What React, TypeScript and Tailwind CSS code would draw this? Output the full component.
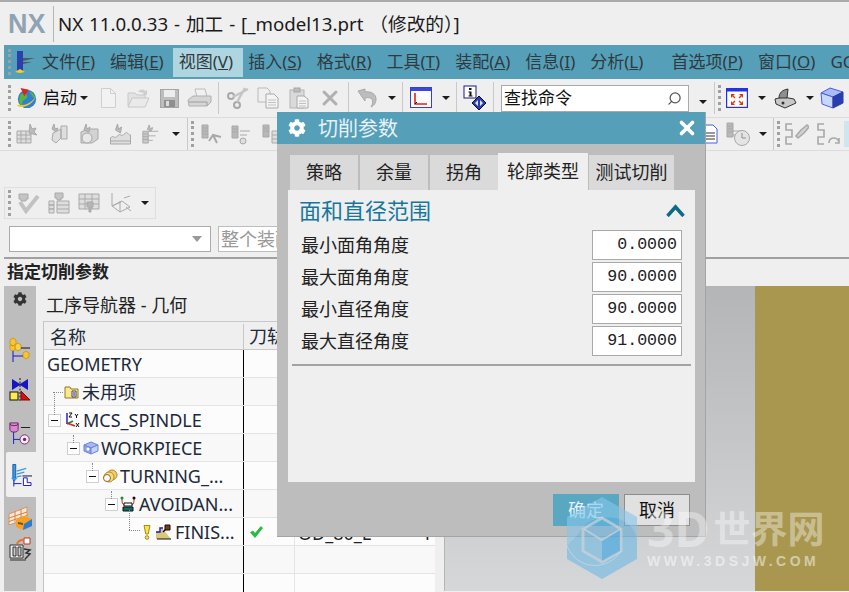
import { Search, X } from "lucide-react";
import { FaCog } from "react-icons/fa";

type IconProps = { className?: string };

const GREY = "#a9a9a9";
const PALE = "#dedede";

const MENU = [
  ["文件", "F"],
  ["编辑", "E"],
  ["视图", "V"],
  ["插入", "S"],
  ["格式", "R"],
  ["工具", "T"],
  ["装配", "A"],
  ["信息", "I"],
  ["分析", "L"],
];

const TABS = ["策略", "余量", "拐角"];

const ANGLES = [
  ["最小面角角度", "0.0000"],
  ["最大面角角度", "90.0000"],
  ["最小直径角度", "90.0000"],
  ["最大直径角度", "91.0000"],
];

/* ---------- small toolbar bits ---------- */

function Grip({ className = "" }: IconProps) {
  return <span className={`h-[26px] w-[3px] shrink-0 border-l-[3px] border-dotted border-[#a0a0a0] ${className}`} />;
}

function Sep({ className = "" }: IconProps) {
  return <span className={`h-[32px] w-px shrink-0 bg-[#c9c9c9] ${className}`} />;
}

function Caret({ className = "" }: IconProps) {
  return <span className={`h-0 w-0 shrink-0 border-x-[4px] border-t-[4px] border-x-transparent border-t-[#1c1c1c] ${className}`} />;
}

function Globe({ className }: IconProps) {
  return (
    <svg viewBox="0 0 24 24" className={className}>
      <circle cx="12" cy="13" r="10" fill="#2f7fd6" />
      <path d="M5 8c3-2 6-1 7 1s-1 4-3 5-3 4-1 7c-4-1-6-6-3-13zM15 5c3 1 6 4 6 7-2 0-3-1-4-3s-2-2-2-4z" fill="#57b53a" />
      <path d="M1 19c6 2 15 0 21-9-3 8-13 14-20 11z" fill="#f3c81e" />
      <path d="M5 1l9 2-5 7z" fill="#d9261c" />
    </svg>
  );
}

function NewDoc({ className }: IconProps) {
  return (
    <svg viewBox="0 0 17 22" className={className}>
      <path d="M1.500 1.500h9l5 5v14h-14z" fill="#f2f2f2" stroke="#cfcfcf" />
      <path d="M10.500 1.500v5h5" fill="none" stroke="#cfcfcf" />
    </svg>
  );
}

function OpenDoc({ className }: IconProps) {
  return (
    <svg viewBox="0 0 24 22" className={className}>
      <path d="M2 6h7l2 2h8v11H2z" fill="#e2e2e2" stroke="#c8c8c8" />
      <path d="M2 20l4-9h17l-4 9z" fill="#eaeaea" stroke="#c8c8c8" />
      <path d="M12 5c2-3 5-3 7-1l2-1v5h-5l2-1c-2-2-4-2-6-2z" fill="#cfcfcf" />
    </svg>
  );
}

function SaveDisk({ className }: IconProps) {
  return (
    <svg viewBox="0 0 19 19" className={className}>
      <rect x="0.500" y="0.500" width="18" height="18" fill="#bdbdbd" stroke="#a5a5a5" />
      <rect x="4" y="1" width="11" height="7" fill="#ededed" />
      <rect x="4" y="11" width="11" height="7" fill="#8f8f8f" />
      <rect x="6" y="12" width="3" height="5" fill="#dcdcdc" />
    </svg>
  );
}

function Printer({ className }: IconProps) {
  return (
    <svg viewBox="0 0 25 20" className={className}>
      <path d="M8 1h10l2 8H10z" fill="#f1f1f1" stroke="#bcbcbc" />
      <path d="M1 12l5-4h18v6l-4 4H2z" fill="#d5d5d5" stroke="#b0b0b0" />
      <path d="M2 14h18v4" fill="none" stroke="#9d9d9d" />
    </svg>
  );
}

function Scissors({ className }: IconProps) {
  return (
    <svg viewBox="0 0 23 22" className={className} fill="none" stroke={GREY} strokeWidth="2">
      <circle cx="5" cy="9" r="3" />
      <circle cx="11" cy="18" r="3" />
      <path d="M7 10l15-8M11 15L19 1" strokeWidth="2.400" stroke="#c5c5c5" />
    </svg>
  );
}

function CopyDoc({ className }: IconProps) {
  return (
    <svg viewBox="0 0 22 22" className={className}>
      <path d="M1 1h9l3 3v11H1z" fill="#f0f0f0" stroke="#b9b9b9" />
      <path d="M9 7h8l4 4v10H9z" fill="#f4f4f4" stroke="#a9a9a9" />
      <path d="M11 13h8M11 15.500h8M11 18h8" stroke="#c0c0c0" />
    </svg>
  );
}

function PasteDoc({ className }: IconProps) {
  return (
    <svg viewBox="0 0 20 22" className={className}>
      <rect x="1" y="3" width="14" height="18" fill="#dadada" stroke="#b5b5b5" />
      <rect x="5" y="1" width="6" height="4" fill="#bcbcbc" stroke="#a5a5a5" />
      <path d="M8 9h7l4 3v9H8z" fill="#f3f3f3" stroke="#a9a9a9" />
      <path d="M10 14h7M10 16.500h7M10 19h7" stroke="#c0c0c0" />
    </svg>
  );
}

function Undo({ className }: IconProps) {
  return (
    <svg viewBox="0 0 20 20" className={className}>
      <path d="M1 3l7-2v3c6-1 11 2 11 7 0 3-1 6-5 8 2-3 2-6 1-8-1-1-4-2-7-1v3z" fill="#bdbdbd" stroke="#a8a8a8" />
    </svg>
  );
}

function CsysWindow({ className }: IconProps) {
  return (
    <svg viewBox="0 0 22 22" className={className}>
      <rect x="0.500" y="0.500" width="21" height="20" fill="#fbfbfb" stroke="#3340d8" />
      <rect x="1" y="1" width="20" height="3" fill="#3a48d8" />
      <path d="M5 6v11h12" fill="none" stroke="#d9261c" strokeWidth="1.600" />
      <path d="M5 17l2-2" stroke="#111" />
    </svg>
  );
}

function InfoBadge({ className }: IconProps) {
  return (
    <svg viewBox="0 0 24 26" className={className}>
      <rect x="1" y="1" width="12" height="12" fill="#fff" stroke="#1a1a8c" />
      <path d="M6 3h2.500v2H6zM5.500 6.500h3v4h1v1h-4v-1h1V7.500h-1z" fill="#111" />
      <path d="M16 11l7 7-7 7-7-7z" fill="#2a3bb8" stroke="#111" />
      <path d="M15 15v6l-3-3zM17 15v6l3-3z" fill="#dfe6ff" />
    </svg>
  );
}

function FitWindow({ className }: IconProps) {
  return (
    <svg viewBox="0 0 22 20" className={className}>
      <rect x="0.500" y="0.500" width="21" height="19" fill="#fff" stroke="#2433e0" strokeWidth="1.400" />
      <rect x="1" y="1" width="20" height="2.500" fill="#2433e0" />
      <path d="M5 6h4L5 10zM17 6h-4l4 4zM5 17h4l-4-4zM17 17h-4l4-4z" fill="#e8340c" />
      <path d="M7 8l2 2M15 8l-2 2M7 15l2-2M15 15l-2-2" stroke="#e8340c" strokeWidth="1.400" />
    </svg>
  );
}

function ShapeSolid({ className }: IconProps) {
  return (
    <svg viewBox="0 0 23 21" className={className}>
      <path d="M1 11l8-2 11 2 2 4-11 5L2 16z" fill="#c8c8c8" stroke="#333" />
      <path d="M5 10c0-5 3-8 9-9l-1 9z" fill="#8f8f8f" stroke="#333" />
      <circle cx="9" cy="15" r="1.500" fill="#333" />
    </svg>
  );
}

function Cube({ className }: IconProps) {
  return (
    <svg viewBox="0 0 24 22" className={className}>
      <path d="M1 6l9-5 13 4-10 5z" fill="#a9bcf7" stroke="#4a5fd8" />
      <path d="M1 6l12 4v11L2 17z" fill="#c9d6fb" stroke="#4a5fd8" />
      <path d="M13 10l10-5v11l-10 5z" fill="#2a3cae" stroke="#2a3cae" />
    </svg>
  );
}

/* greyed-out mill/grid tools of the second and third toolbars */
function GreyTool({ className, kind }: IconProps & { kind: number }) {
  return (
    <svg viewBox="0 0 22 22" className={className} fill={PALE} stroke={GREY}>
      {kind === 0 && (
        <>
          <path d="M1 8h14v12H1zM1 12h14M1 16h14M5 8v12M10 8v12" />
          <path d="M14 1l2 5 4-1-2 4 3 3-8-2z" fill="#bcbcbc" />
        </>
      )}
      {kind === 1 && (
        <>
          <path d="M13 3h6v13h-6zM5 10l8-4v9l-5 5-4-3z" />
          <path d="M6 1l1 5 3-1-2 4-4-3z" fill="#bcbcbc" />
        </>
      )}
      {kind === 2 && (
        <>
          <path d="M3 9l7-3h10v10l-6 4H3z" fill="#d2d2d2" />
          <circle cx="9" cy="15" r="5" fill="#e8e8e8" />
          <path d="M8 1l1 5 3-2-1 5-5-2z" fill="#bcbcbc" />
        </>
      )}
      {kind === 3 && (
        <>
          <path d="M1 15c3-4 4 2 7-2s4 2 7-2 3 1 6 1v9H1z" />
          <path d="M1 18h20" />
          <path d="M8 1l1 5 3-2-1 6-5-3z" fill="#bcbcbc" />
        </>
      )}
      {kind === 4 && (
        <>
          <path d="M2 8h6v13H2zM2 11h6M2 14h6M2 17h6" fill="#c8c8c8" />
          <path d="M8 8h11M8 13h8M8 18h5" />
          <path d="M9 1l1 4 3-1-2 4-4-2z" fill="#bcbcbc" />
        </>
      )}
      {kind === 5 && (
        <>
          <path d="M2 2h6v13H2zM2 5h6M2 8h6M2 11h6" fill="#b8b8b8" />
          <path d="M9 18l4-6 8 2M13 12l4 8" fill="none" strokeWidth="2" />
        </>
      )}
      {kind === 6 && (
        <>
          <path d="M2 3h6v12H2zM2 6h6M2 9h6" fill="#b8b8b8" />
          <path d="M10 8h10M10 12h7" />
          <circle cx="13" cy="18" r="3" />
        </>
      )}
      {kind === 7 && (
        <>
          <path d="M2 2h6v12H2zM2 5h6M2 8h6" fill="#b8b8b8" />
          <path d="M11 8h9v12h-9zM11 12h9M11 16h9" />
        </>
      )}
      {kind === 8 && (
        <>
          <path d="M2 2h9v5H9v2H4V7H2z" fill="#c4c4c4" />
          <path d="M3 10l6 9L21 4" fill="none" stroke="#c2c2c2" strokeWidth="4" />
        </>
      )}
      {kind === 9 && (
        <>
          <path d="M7 1h8v5h-2v2H9V6H7z" fill="#c4c4c4" />
          <path d="M1 9h5v4H1zM1 13h5v4H1zM1 17h5v4H1zM9 9h12v12H9zM9 13h12M9 17h12" />
        </>
      )}
      {kind === 10 && (
        <>
          <path d="M1 2h20v15H1zM1 7h20M1 12h20M7 2v15M14 2v15" />
          <path d="M9 10h6v5h-2v5h-2v-5H9z" fill="#b5b5b5" />
        </>
      )}
      {kind === 11 && (
        <path d="M3 1v13l8 6 10-5-8-6-10 5M3 14l9-4M11 20V9M15 6l6-2M17 15l5 4" fill="none" />
      )}
    </svg>
  );
}

function ClockTool({ className }: IconProps) {
  return (
    <svg viewBox="0 0 24 24" className={className} fill="#d6d6d6" stroke={GREY}>
      <path d="M1 1h6v14H1zM1 4h6M1 7h6M1 10h6" fill="#b8b8b8" />
      <path d="M7 9h10M7 13h5" />
      <circle cx="16" cy="16" r="7.500" fill="#e4e4e4" />
      <path d="M16 11v5h4" fill="none" stroke="#8f8f8f" />
    </svg>
  );
}

function DocTool({ className }: IconProps) {
  return (
    <svg viewBox="0 0 16 20" className={className}>
      <path d="M1 1h10l4 4v14H1z" fill="#fff" stroke="#4a5fd8" />
      <path d="M3 9h10M3 12h10M3 15h10" stroke="#333" />
    </svg>
  );
}

function BoltTool({ className }: IconProps) {
  return (
    <svg viewBox="0 0 24 22" className={className} fill="none" stroke={GREY} strokeWidth="1.600">
      <path d="M7 1H1v6h6v7H1v7h6" />
      <path d="M11 13l5-6 6-5 2 2-5 6-6 5z" fill="#d2d2d2" />
    </svg>
  );
}

function LoopTool({ className }: IconProps) {
  return (
    <svg viewBox="0 0 24 22" className={className} fill="none" stroke={GREY} strokeWidth="1.600">
      <path d="M7 1H1v6h6v7H1v7h6" />
      <path d="M12 20c0-6 8-7 10-1M22 15v5h-4" />
    </svg>
  );
}

/* ---------- navigator rail ---------- */

function RailGeometry({ className }: IconProps) {
  return (
    <svg viewBox="0 0 22 26" className={className}>
      <path d="M1 3l3-2 3 2v4L4 9 1 7z" fill="#f6c531" stroke="#d49a16" />
      <path d="M6 8l3-2 3 2v4l-3 2-3-2z" fill="#f8d24a" stroke="#d49a16" />
      <path d="M1 8l3 1 2-1v5L3 14 1 12z" fill="#f6c531" stroke="#d49a16" />
      <path d="M14 16l3-2 3 2v4l-3 2-3-2z" fill="#f6c531" stroke="#d49a16" />
      <path d="M4 14v11M4 19h10" stroke="#1616c8" />
      <path d="M12 11h9" stroke="#111" />
    </svg>
  );
}

function RailMachine({ className }: IconProps) {
  return (
    <svg viewBox="0 0 22 24" className={className}>
      <path d="M3 1l8 5 8-5v11l-8-5-8 5z" fill="#1414c8" />
      <path d="M11 0v24" stroke="#111" strokeDasharray="2 1.500" />
      <rect x="1" y="14" width="8" height="8" fill="#ffe94d" stroke="#111" />
      <path d="M12 13l9 9h-9z" fill="#d3120e" stroke="#7a0a08" />
    </svg>
  );
}

function RailTool({ className }: IconProps) {
  return (
    <svg viewBox="0 0 24 26" className={className}>
      <path d="M1 2h9v7a4.500 3 0 0 1-9 0z" fill="#d78ad0" stroke="#6b1f5f" />
      <path d="M1 3a4.500 2 0 0 0 9 0" fill="none" stroke="#6b1f5f" />
      <path d="M5 12v13M5 20h7" stroke="#1616c8" />
      <path d="M13 7h10" stroke="#111" />
      <circle cx="17" cy="20" r="5" fill="#f3e9f3" stroke="#7a1f6a" />
      <circle cx="17" cy="20" r="1.800" fill="#7a1f6a" />
    </svg>
  );
}

function RailProgram({ className }: IconProps) {
  return (
    <svg viewBox="0 0 23 24" className={className}>
      <path d="M3 1h3v14H3z" fill="#3b9be6" stroke="#1a5aa8" />
      <path d="M7 8l10-3M7 11l8-2M7 14l5-1" stroke="#3b9be6" strokeWidth="1.400" />
      <path d="M1 15h7l-3.500 4z" fill="#3b9be6" />
      <path d="M4 17v7M4 21h8" stroke="#1616c8" />
      <path d="M13 13h10" stroke="#111" />
      <path d="M14 15v8h8v-3h-4v-5z" fill="#fff" stroke="#1616c8" />
    </svg>
  );
}

function RailGrid({ className }: IconProps) {
  return (
    <svg viewBox="0 0 24 24" className={className}>
      <path d="M1 8l18-7v12L1 19z" fill="#fbe9d2" stroke="#dd8f60" />
      <path d="M7 5.500v11M13 3v11M1 12l18-6M1 15.500l18-6" stroke="#dd7f48" />
      <path d="M8 14l8-4 8 3v7l-9 4-7-3z" fill="#f7a11f" />
      <path d="M16 18l8-5v7l-9 4z" fill="#2c7cd6" />
      <path d="M10 16l5 1v2l-5-1z" fill="#555" />
    </svg>
  );
}

function RailMachineTool({ className }: IconProps) {
  return (
    <svg viewBox="0 0 23 25" className={className}>
      <path d="M1 8h13v13H1z" fill="#ececec" stroke="#333" />
      <path d="M4 10h3v9H4zM9 10h3v9H9z" fill="#c9c9c9" stroke="#333" />
      <path d="M1 22h16v2H1z" fill="#777" />
      <path d="M15 12l6 1-4 3 4 1-5 5" fill="none" stroke="#333" strokeWidth="1.500" />
      <path d="M15 1h6v6h-6z" fill="#fff" stroke="#d9261c" />
      <path d="M8 7c1-3 3-4 6-4" fill="none" stroke="#e8731c" strokeWidth="2" />
    </svg>
  );
}

/* ---------- tree icons ---------- */

function TreeFolder({ className }: IconProps) {
  return (
    <svg viewBox="0 0 15 13" className={className}>
      <path d="M1 1h5l1 2h7v9H1z" fill="#fbe88e" stroke="#8c7a2a" />
      <path d="M8 5h4v6H8z" fill="#fff" stroke="#444" />
      <path d="M9 7h2M9 9h2" stroke="#1616c8" />
    </svg>
  );
}

function TreeCsys({ className }: IconProps) {
  return (
    <svg viewBox="0 0 16 16" className={className}>
      <path d="M3 12l6-3" stroke="#1a8a3a" strokeWidth="1.600" />
      <path d="M3 12V1" stroke="#1616c8" strokeWidth="1.400" />
      <path d="M3 11l8 3" stroke="#d9261c" strokeWidth="1.800" />
      <path d="M5 1h3L5 5h3M11 2l1.500 2L14 2M12.500 4v2M12 11l3 4M15 11l-3 4" fill="none" stroke="#111" />
    </svg>
  );
}

function TreeWorkpiece({ className }: IconProps) {
  return (
    <svg viewBox="0 0 16 14" className={className}>
      <path d="M1 4l7-3 7 3-7 3z" fill="#a7b8f5" stroke="#6f83d8" />
      <path d="M1 4l7 3v6l-7-3z" fill="#8ea3f0" stroke="#6f83d8" />
      <path d="M8 7l7-3v6l-7 3z" fill="#c5d0fa" stroke="#6f83d8" />
      <circle cx="5" cy="8" r="1.500" fill="#fff" />
    </svg>
  );
}

function TreeTurning({ className }: IconProps) {
  return (
    <svg viewBox="0 0 16 14" className={className}>
      <ellipse cx="10" cy="6" rx="5" ry="5" fill="#f3cf6a" stroke="#b88a1c" />
      <ellipse cx="7" cy="8" rx="5" ry="5" fill="#f7dd8e" stroke="#b88a1c" />
      <circle cx="5" cy="9" r="3.500" fill="#fff" stroke="#8a6a10" />
    </svg>
  );
}

function TreeAvoid({ className }: IconProps) {
  return (
    <svg viewBox="0 0 16 16" className={className}>
      <path d="M2 2v3c0 3 2 4 3 5M14 2v3c0 3-2 4-3 5" fill="none" stroke="#d9261c" />
      <circle cx="2" cy="2" r="1.500" fill="#1a8a3a" />
      <circle cx="14" cy="2" r="1.500" fill="#111" />
      <path d="M4 7h8v3H4z" fill="#fff" stroke="#111" />
      <path d="M3 11h10v4H3z" fill="#0f6a6a" stroke="#111" />
    </svg>
  );
}

function TreeFinish({ className }: IconProps) {
  return (
    <svg viewBox="0 0 16 16" className={className}>
      <path d="M1 15V8h4v-3h3l8 10z" fill="#d9c878" />
      <path d="M1 8h4V4h3" fill="none" stroke="#1616c8" strokeWidth="1.400" />
      <path d="M8 8l6-6" stroke="#111" strokeWidth="1.400" />
      <path d="M10 1h5v5h-5z" fill="#7a3a12" stroke="#111" />
      <path d="M2 15h14" stroke="#111" />
    </svg>
  );
}

function Bang({ className }: IconProps) {
  return (
    <svg viewBox="0 0 8 16" className={className}>
      <path d="M1 1.500h6L5.200 10H2.800z" fill="#f8e64a" stroke="#a58a10" />
      <circle cx="4" cy="13.500" r="1.800" fill="#f8e64a" stroke="#a58a10" />
    </svg>
  );
}

function GreenCheck({ className }: IconProps) {
  return (
    <svg viewBox="0 0 13 12" className={className}>
      <path d="M0.500 6.500l2.500-1.500 2 2.500L11 0.500l1.500 1.500L5 11.500z" fill="#1fc23a" stroke="#12a02c" strokeWidth="0.600" />
    </svg>
  );
}

function Watermark({ className }: IconProps) {
  return (
    <svg viewBox="0 0 72 84" className={className}>
      <path d="M36 1l35 20v42L36 83 1 63V21z" fill="#63b7e6" fillOpacity="0.55" />
      <path d="M36 1l35 20v22c-2-12-14-24-35-21-10 1-18 6-23 15L1 50V21z" fill="#ffffff" fillOpacity="0.14" />
      <path d="M36 22l19 11v22L36 66 17 55V33z" fill="none" stroke="#ccd3d8" strokeOpacity="0.7" strokeWidth="3" />
      <path d="M18 33l18 11 19-11" fill="none" stroke="#ccd3d8" strokeOpacity="0.7" strokeWidth="2" />
      <path d="M36 45l18-11v21L36 65z" fill="#4ea8da" fillOpacity="0.55" />
      <path d="M1 50c10 24 40 26 54 5" fill="none" stroke="#d5dde2" strokeOpacity="0.6" />
    </svg>
  );
}

/* ---------- tree rows ---------- */

function MinusBox({ lineUp = "h-[8px]", top = "-top-[8px]" }: { lineUp?: string; top?: string }) {
  return (
    <span className="relative flex h-[13px] w-[13px] shrink-0 items-center justify-center border border-[#cfcfcf] bg-white">
      <span className="h-px w-[7px] bg-[#111]" />
      <span className={`absolute left-[5px] w-0 border-l border-dotted border-[#888] ${lineUp} ${top}`} />
    </span>
  );
}

function Row({ children, col2, col3, odd }: { children?: React.ReactNode; col2?: React.ReactNode; col3?: string; odd?: boolean }) {
  return (
    <div className={`flex h-[28px] border-b border-[#e4e4e4] ${odd ? "bg-[#f8f8f8]" : "bg-[#fcfcfc]"}`}>
      <div className="flex w-[199px] shrink-0 items-center whitespace-nowrap pt-[1px]">{children}</div>
      <div className="flex w-[51px] shrink-0 items-center border-l border-l-black pl-[6px]">{col2}</div>
      <div className="flex flex-1 items-center justify-between border-l border-[#e4e4e4] px-[3px] pt-[2px] text-[18px] leading-none text-[#222]">
        {col3 && <span>{col3}</span>}
        {col3 && <span>1</span>}
      </div>
    </div>
  );
}

export default function App() {
  return (
    <div className="relative h-[592px] w-[849px] overflow-hidden border-t-2 border-[#aaaaaa] bg-[#efefef] font-['Noto_Sans','Noto_Sans_CJK_SC',sans-serif] text-[#222]">
      {/* title bar */}
      <div className="flex h-[43px] items-center pt-[1px]">
        <span className="ml-[8px] w-[39px] font-['Liberation_Sans',sans-serif] text-[27px] font-bold text-[#8fa3b3]">NX</span>
        <span className="ml-[6px] h-[36px] w-px bg-[#b5b5b5]" />
        <span className="ml-[4px] whitespace-nowrap text-[18.700px] text-[#1a1a1a] [word-spacing:1px]">NX 11.0.0.33 - 加工 - [_model13.prt （修改的）]</span>
      </div>

      {/* menu bar */}
      <div className="ml-[4px] flex h-[34px] items-center overflow-hidden whitespace-nowrap bg-[#559fb9] text-[17px] text-[#2f3a3e]">
        <Grip className="ml-[4px]" />
        <svg viewBox="0 0 24 24" className="ml-px h-[24px] w-[24px] shrink-0">
          <rect x="5" y="1" width="6" height="20" fill="#2b3fb0" />
          <path d="M11 8h12l-12 3zM11 12h9l-9 2z" fill="#4d5a66" />
          <path d="M3 22l5-3 5 3-5 1z" fill="#f2d21e" />
        </svg>
        <div className="flex shrink-0 items-center gap-[3px]">
          {MENU.map(([label, key]) => (
            <span key={key} className={`flex h-[29px] items-center px-[6px] ${key === "V" ? "-mr-[4px] bg-[#afd5e0] pr-[10px]" : ""}`}>
              {label}(<u>{key}</u>)
            </span>
          ))}
          <span className="ml-[13px] flex h-[29px] items-center px-[6px]">首选项(<u>P</u>)</span>
          <span className="flex h-[29px] items-center px-[6px]">窗口(<u>O</u>)</span>
          <span className="flex h-[29px] items-center px-[6px]">GC</span>
        </div>
      </div>

      {/* toolbar 1 */}
      <div className="flex h-[39px] items-center border-b border-[#dcdcdc] pl-[8px]">
        <Grip />
        <Globe className="ml-[5px] h-[24px] w-[22px] shrink-0" />
        <span className="ml-[5px] w-[33px] shrink-0 whitespace-nowrap text-[17px] text-[#111]">启动</span>
        <Caret className="ml-[4px]" />
        <NewDoc className="ml-[12px] h-[22px] w-[17px] shrink-0" />
        <OpenDoc className="ml-[9px] h-[22px] w-[24px] shrink-0" />
        <SaveDisk className="ml-[10px] h-[19px] w-[19px] shrink-0" />
        <Printer className="ml-[8px] h-[20px] w-[25px] shrink-0" />
        <Sep className="ml-[6px]" />
        <Scissors className="ml-[7px] h-[22px] w-[23px] shrink-0" />
        <CopyDoc className="ml-[8px] h-[22px] w-[22px] shrink-0" />
        <PasteDoc className="ml-[10px] h-[22px] w-[20px] shrink-0" />
        <X className="ml-[9px] h-[24px] w-[24px] shrink-0 text-[#b0b0b0]" strokeWidth={3} />
        <Sep className="ml-[6px]" />
        <Undo className="ml-[8px] h-[20px] w-[20px] shrink-0" />
        <Caret className="ml-[11px]" />
        <Sep className="ml-[6px]" />
        <CsysWindow className="ml-[7px] h-[22px] w-[22px] shrink-0" />
        <Caret className="ml-[10px]" />
        <Sep className="ml-[6px]" />
        <InfoBadge className="ml-[6px] h-[26px] w-[24px] shrink-0" />
        <Sep className="ml-[6px]" />
        <div className="ml-[7px] flex h-[27px] w-[188px] shrink-0 items-center justify-between border border-[#a9a9a9] bg-white px-[2px] text-[17px] text-[#111]">
          <span>查找命令</span>
          <Search className="mr-[4px] h-[15px] w-[15px] -scale-x-100 text-[#555]" />
        </div>
        <Caret className="ml-[10px] mt-[8px]" />
        <Sep className="ml-[7px]" />
        <Grip className="ml-[3px]" />
        <FitWindow className="ml-[5px] h-[20px] w-[22px] shrink-0" />
        <Caret className="ml-[10px]" />
        <ShapeSolid className="ml-[8px] h-[21px] w-[23px] shrink-0" />
        <Caret className="ml-[9px]" />
        <Cube className="ml-[6px] h-[22px] w-[24px] shrink-0" />
      </div>

      {/* toolbar 2 */}
      <div className="flex h-[33px] items-center border-b border-[#dcdcdc] pl-[8px]">
        <Grip />
        <GreyTool kind={0} className="ml-[5px] h-[22px] w-[22px] shrink-0" />
        <GreyTool kind={1} className="ml-[10px] h-[22px] w-[22px] shrink-0" />
        <GreyTool kind={2} className="ml-[8px] h-[22px] w-[22px] shrink-0" />
        <GreyTool kind={3} className="ml-[9px] h-[22px] w-[23px] shrink-0" />
        <GreyTool kind={4} className="ml-[9px] h-[22px] w-[20px] shrink-0" />
        <Caret className="ml-[11px]" />
        <Sep className="ml-[7px]" />
        <Grip className="ml-[3px]" />
        <GreyTool kind={5} className="ml-[6px] h-[22px] w-[22px] shrink-0" />
        <GreyTool kind={6} className="ml-[8px] h-[22px] w-[22px] shrink-0" />
        <GreyTool kind={7} className="ml-[9px] h-[22px] w-[22px] shrink-0" />
        <DocTool className="ml-[419px] h-[20px] w-[16px] shrink-0" />
        <ClockTool className="ml-[8px] h-[24px] w-[24px] shrink-0" />
        <Caret className="ml-[9px]" />
        <Sep className="ml-[6px]" />
        <Grip className="ml-[3px]" />
        <BoltTool className="ml-[5px] h-[22px] w-[24px] shrink-0" />
        <LoopTool className="ml-[8px] h-[22px] w-[24px] shrink-0" />
        <span className="ml-[3px] h-[26px] w-[6px] shrink-0 bg-[#cfe6ee]" />
      </div>

      {/* toolbar 3 */}
      <div className="ml-[4px] mt-[36px] flex h-[32px] w-[152px] items-center border border-[#dfdfdf] pl-[3px]">
        <Grip />
        <GreyTool kind={8} className="ml-[5px] h-[22px] w-[24px] shrink-0" />
        <GreyTool kind={9} className="ml-[7px] h-[22px] w-[24px] shrink-0" />
        <GreyTool kind={10} className="ml-[7px] h-[22px] w-[22px] shrink-0" />
        <GreyTool kind={11} className="ml-[8px] h-[22px] w-[24px] shrink-0" />
        <Caret className="ml-[9px]" />
      </div>

      {/* filter row */}
      <div className="mt-[7px] flex pl-[9px]">
        <div className="flex h-[26px] w-[202px] items-center justify-end border border-[#aaaaaa] bg-white pr-[8px]">
          <span className="h-0 w-0 border-x-[5px] border-t-[6px] border-x-transparent border-t-[#999]" />
        </div>
        <div className="ml-[7px] flex h-[26px] w-[200px] items-center border border-[#bdbdbd] bg-white pl-[2px] text-[18px] text-[#999]">整个装配</div>
      </div>

      <div className="ml-[4px] mt-[5px] h-[2px] bg-[#a0a0a0]" />
      <div className="flex h-[27px] items-center pb-[2px] pl-[7px] text-[17px] font-bold text-[#222]">指定切削参数</div>

      {/* lower area */}
      <div className="flex h-[305px]">
        {/* rail */}
        <div className="ml-[4px] flex w-[32px] shrink-0 flex-col items-center bg-[#bdbdbd]">
          <FaCog className="mt-[6px] h-[14px] w-[14px] text-[#333]" />
          <RailGeometry className="mt-[31px] h-[26px] w-[22px]" />
          <RailMachine className="mt-[15px] h-[24px] w-[22px]" />
          <RailTool className="mt-[18px] h-[26px] w-[22px]" />
          <div className="ml-[2px] mt-[6px] flex h-[45px] w-[30px] items-center justify-center rounded-l-[2px] bg-[#efefef]">
            <RailProgram className="h-[24px] w-[22px]" />
          </div>
          <RailGrid className="mt-[9px] h-[24px] w-[24px]" />
          <RailMachineTool className="mt-[7px] h-[25px] w-[23px]" />
        </div>

        {/* navigator */}
        <div className="w-[409px] shrink-0 border-r border-[#b5b5b5]">
          <div className="flex h-[35px] items-center pl-[10px] pt-[3px] text-[18px] text-[#222]">工序导航器 - 几何</div>
          <div className="ml-[7px] w-[392px] border-l border-[#c4c4c4] text-[18px] leading-none text-[#1c2a3a]">
            <div className="flex h-[29px] items-center border-y border-[#c8c8c8] pt-[2px] text-[18px]">
              <div className="w-[199px] pl-[6px]">名称</div>
              <div className="h-full w-[51px] whitespace-nowrap border-l border-[#c8c8c8] pl-[5px] leading-[24px]">刀轨</div>
            </div>
            <Row>
              <span className="pl-[3px]">GEOMETRY</span>
            </Row>
            <Row odd>
              <span className="relative ml-[20px] flex items-center text-[18px]">
                <span className="absolute -left-[11px] top-1/2 w-[10px] border-t border-dotted border-[#888]" />
                <TreeFolder className="h-[13px] w-[15px]" />
                <span className="ml-[3px]">未用项</span>
              </span>
            </Row>
            <Row>
              <span className="ml-[4px] flex items-center">
                <MinusBox lineUp="h-[21px]" top="-top-[21px]" />
                <TreeCsys className="ml-[3px] h-[16px] w-[16px]" />
                <span className="ml-[3px]">MCS_SPINDLE</span>
              </span>
            </Row>
            <Row odd>
              <span className="ml-[23px] flex items-center">
                <MinusBox />
                <TreeWorkpiece className="ml-[3px] h-[14px] w-[16px]" />
                <span className="ml-[2px]">WORKPIECE</span>
              </span>
            </Row>
            <Row>
              <span className="ml-[42px] flex items-center">
                <MinusBox />
                <TreeTurning className="ml-[3px] h-[14px] w-[16px]" />
                <span className="ml-[2px]">TURNING_...</span>
              </span>
            </Row>
            <Row odd>
              <span className="ml-[61px] flex items-center">
                <MinusBox />
                <TreeAvoid className="ml-[2px] h-[16px] w-[16px]" />
                <span className="ml-[3px]">AVOIDAN...</span>
              </span>
            </Row>
            <Row col2={<GreenCheck className="h-[12px] w-[13px]" />} col3="OD_80_L">
              <span className="relative ml-[85px] flex items-center">
                <span className="absolute left-0 -top-[13px] h-[20px] w-0 border-l border-dotted border-[#888]" />
                <span className="absolute left-0 top-[7px] w-[11px] border-t border-dotted border-[#888]" />
                <Bang className="ml-[14px] h-[16px] w-[8px]" />
                <TreeFinish className="ml-[4px] h-[16px] w-[16px]" />
                <span className="ml-[4px]">FINIS...</span>
              </span>
            </Row>
            <Row odd />
            <Row />
          </div>
        </div>

        {/* graphics window */}
        <div className="flex-1 bg-gradient-to-b from-[#b4b5b7] to-[#d6d7d9]" />
        <div className="w-[94px] bg-[#a9974f]" />
      </div>

      {/* cutting parameters dialog */}
      <div className="absolute left-[277px] top-[110px] flex h-[425px] w-[429px] flex-col border-b border-r border-[#a4a4a4] bg-[#bdbdbd]">
        <div className="flex h-[32px] shrink-0 items-center bg-[#559fb9] pl-[11px] pr-[7px] text-[#e6f2f6]">
          <FaCog className="h-[18px] w-[18px] text-white" />
          <span className="ml-[12px] pt-[2px] text-[20px]">切削参数</span>
          <X className="ml-auto h-[22px] w-[22px] text-white" strokeWidth={4} />
        </div>
        <div className="flex h-[46px] shrink-0 items-end pl-[13px] text-[18px] text-[#222]">
          {TABS.map((t) => (
            <div key={t} className="mr-[2px] flex h-[35px] w-[68px] items-center justify-center bg-[#dadada]">
              {t}
            </div>
          ))}
          <div className="-ml-[2px] flex h-[37px] w-[90px] items-center justify-center bg-[#efefef]">轮廓类型</div>
          <div className="ml-px flex h-[35px] w-[85px] items-center justify-center bg-[#dadada]">测试切削</div>
        </div>
        <div className="ml-[11px] h-[292px] w-[407px] shrink-0 bg-[#efefef] px-[4px]">
          <div className="flex h-[40px] items-center justify-between pl-[7px] pr-[6px]">
            <span className="text-[22px] leading-[36px] text-[#17779b]">面和直径范围</span>
            <svg viewBox="0 0 19 13" className="h-[13px] w-[19px]">
              <path d="M1.500 12L9.500 3l8 9" fill="none" stroke="#0f6a88" strokeWidth="3.500" />
            </svg>
          </div>
          <div className="flex flex-col gap-[2px]">
            {ANGLES.map(([label, value]) => (
              <div key={label} className="flex h-[30px] items-center justify-between pl-[9px] pr-[9px]">
                <span className="text-[18px] text-[#222]">{label}</span>
                <div className="flex h-[30px] w-[90px] items-center justify-end border border-[#a9a9a9] bg-white pr-[4px] font-['Liberation_Mono',monospace] text-[16.600px] text-[#222]">
                  {value}
                </div>
              </div>
            ))}
          </div>
          <div className="mt-[8px] h-[2px] bg-[#a3a3a3]" />
        </div>
        <div className="mt-[12px] flex justify-end gap-[5px] pr-[15px] text-[18px]">
          <button className="flex h-[32px] w-[66px] items-center justify-center bg-[#5aa7c2] text-[#e4f1f5]">确定</button>
          <button className="flex h-[32px] w-[66px] items-center justify-center border border-[#8d8d8d] bg-[#e1e1e1] text-[#111]">取消</button>
        </div>
      </div>

      {/* watermark */}
      <div className="absolute left-[566px] top-[494px] flex items-start">
        <Watermark className="h-[84px] w-[72px]" />
        <div className="ml-[9px] mt-[11px] flex flex-col">
          <span className="flex items-center whitespace-nowrap font-bold leading-[44px] text-white/40">
            <span className="text-[48px]">3D</span>
            <span className="ml-[4px] text-[37px]">世界网</span>
          </span>
          <span className="mt-[3px] whitespace-nowrap font-['Liberation_Sans',sans-serif] text-[14px] font-bold leading-[14px] tracking-[3.500px] text-white/50">WWW.3DSJW.COM</span>
        </div>
      </div>
    </div>
  );
}
